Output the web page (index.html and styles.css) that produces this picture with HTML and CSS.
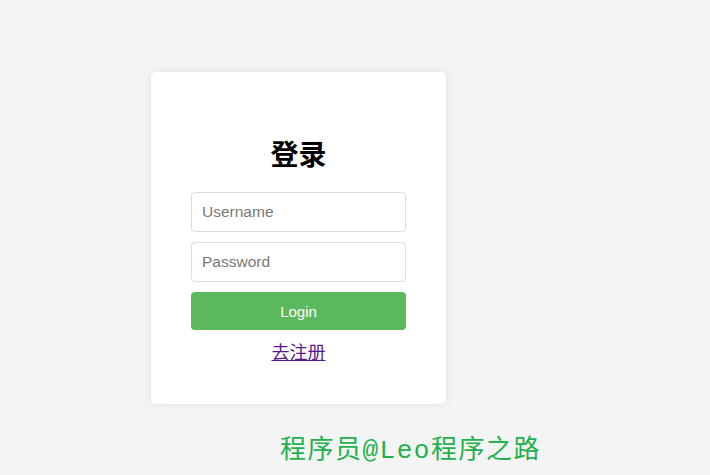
FILE: index.html
```html
<!DOCTYPE html>
<html lang="zh">
<head>
<meta charset="utf-8">
<title>登录</title>
<link rel="stylesheet" href="styles.css">
</head>
<body>
<main class="page">
  <form class="card">
    <h2 class="title">登录</h2>
    <input class="field" type="text" placeholder="Username">
    <input class="field" type="password" placeholder="Password">
    <button class="btn" type="button">Login</button>
    <a class="link" href="#">去注册</a>
  </form>
</main>
<div class="watermark">程序员@Leo程序之路</div>
</body>
</html>
```
FILE: styles.css
```css
html, body {
  margin: 0;
  height: 100%;
}
body {
  background: #f4f4f4;
  font-family: "Liberation Sans", Arial, "Noto Sans CJK SC", sans-serif;
  position: relative;
  overflow: hidden;
}
.page {
  padding: 72px 0 0 151px;
}
.card {
  width: 215px;
  padding: 40px 40px 42px;
  background: #fff;
  border-radius: 5px;
  box-shadow: 0 0 8px rgba(0, 0, 0, 0.08);
  display: flex;
  flex-direction: column;
}
.title {
  margin: 27px 0 25px;
  text-align: center;
  font-size: 28px;
  line-height: 28px;
  font-weight: bold;
  color: #000;
  font-family: "Noto Sans CJK SC", sans-serif;
}
.field {
  box-sizing: border-box;
  width: 215px;
  height: 40px;
  margin: 0 0 10px;
  padding: 0 10px;
  border: 1px solid #dcdcdc;
  border-radius: 4px;
  font-family: "Liberation Sans", Arial, sans-serif;
  font-size: 15.5px;
  color: #333;
  background: #fff;
  outline: none;
}
.field::placeholder {
  color: #777;
}
.btn {
  height: 38px;
  width: 215px;
  margin-top: 0;
  border: none;
  border-radius: 4px;
  background: #5cb85c;
  color: #fff;
  font-family: "Liberation Sans", Arial, sans-serif;
  font-size: 15px;
  cursor: pointer;
}
.link {
  align-self: center;
  margin-top: 10px;
  font-size: 18px;
  line-height: 22px;
  color: #551a8b;
  text-decoration: underline;
  font-family: "Noto Sans CJK SC", sans-serif;
}
.watermark {
  position: absolute;
  left: 280px;
  top: 434px;
  font-family: "Liberation Mono", "Noto Sans CJK SC", monospace;
  font-size: 26px;
  line-height: 34px;
  color: #22b14c;
  letter-spacing: 1.5px;
  white-space: nowrap;
}
```
